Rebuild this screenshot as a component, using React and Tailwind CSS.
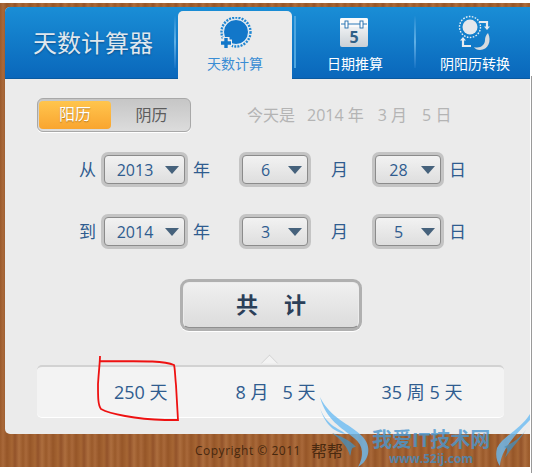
const font = 'font-["Open_Sans","Noto_Sans_CJK_SC",sans-serif]';

function CountIcon() {
  return (
    <svg width="34" height="34" viewBox="0 0 34 34">
      <circle cx="18" cy="15" r="14.5" fill="none" stroke="#1e86d2" strokeWidth="2.4" strokeDasharray="2 1.2" />
      <circle cx="18" cy="15" r="12.5" fill="#1277c9" stroke="#fff" strokeWidth="0.8" />
      <path d="M2 26h12M8 20v12" stroke="#ebebeb" strokeWidth="7" />
      <path d="M3 26h10M8 21v10" stroke="#1277c9" strokeWidth="3.4" />
    </svg>
  );
}

function CalendarIcon() {
  return (
    <svg width="30" height="31" viewBox="0 0 30 31">
      <defs>
        <linearGradient id="cal" x1="0" y1="0" x2="0" y2="1">
          <stop offset="0" stopColor="#ffffff" />
          <stop offset="1" stopColor="#c9d0d6" />
        </linearGradient>
      </defs>
      <rect x="1" y="1" width="28" height="29" rx="2" fill="url(#cal)" />
      <rect x="1" y="1" width="28" height="9" rx="2" fill="#fafafa" />
      <path d="M2 7h26" stroke="#2a78b8" strokeWidth="1.2" />
      <rect x="6" y="4" width="3" height="7" fill="#fff" stroke="#1f6cab" strokeWidth="0.9" />
      <rect x="21" y="4" width="3" height="7" fill="#fff" stroke="#1f6cab" strokeWidth="0.9" />
      <text x="15" y="26" textAnchor="middle" fontSize="16" fontWeight="700" fontFamily="Open Sans, sans-serif" fill="#2f6087">5</text>
    </svg>
  );
}

function ConvertIcon() {
  return (
    <svg width="34" height="36" viewBox="0 0 34 36">
      <circle cx="12" cy="12" r="7.5" fill="#e4e8ec" />
      <circle cx="12" cy="12" r="10.5" fill="none" stroke="#e8eef3" strokeWidth="1.4" strokeDasharray="1.6 1.4" />
      <path d="M21 7h8v5" fill="none" stroke="#e6ebef" strokeWidth="2.2" />
      <path d="M26 11.5l3 3.5 3-3.5z" fill="#e6ebef" />
      <path d="M13 31H5v-6" fill="none" stroke="#e6ebef" strokeWidth="2.2" />
      <path d="M2 25.5l3-3.5 3 3.5z" fill="#e6ebef" />
      <path d="M30 18c4 8 0 17-8 17-3 0-5-1-6-3 6 2 11-2 11-7 0-3 1-5 3-7z" fill="#d5dade" />
    </svg>
  );
}

function Divider() {
  return <div className="w-[2px] h-[52px] mt-[9px] shrink-0 bg-gradient-to-b from-[#1a8ad2] via-[#5fb0e6] to-[#1272c4]" />;
}

function Select({ value, className }) {
  return (
    <div className={`h-[35px] p-[3px] rounded-[7px] bg-[#c4c4c4] shrink-0 ${className}`}>
      <div className="h-full rounded-[4px] border border-[#8b8b8b] bg-gradient-to-b from-[#f2f2f2] to-[#dedede] flex items-center justify-between pr-[5px]">
        <span className="flex-1 text-center text-[16px] leading-none text-[#2f5c8f]">{value}</span>
        <span className="w-0 h-0 border-x-[7px] border-x-transparent border-t-[8px] border-t-[#46627c] shrink-0" />
      </div>
    </div>
  );
}

function DateRow({ lead, year, month, day, className }) {
  const unit = 'text-[17px] leading-none text-[#2f5c8f] text-center shrink-0';
  return (
    <div className={`flex items-center h-[35px] ${className}`}>
      <span className={`${unit} w-[17px] ml-[74px] mr-[5px]`}>{lead}</span>
      <Select value={year} className="w-[87px]" />
      <span className={`${unit} w-[17px] ml-[5px] mr-[29px]`}>年</span>
      <Select value={month} className="w-[72px]" />
      <span className={`${unit} w-[17px] ml-[20px] mr-[24px]`}>月</span>
      <Select value={day} className="w-[72px]" />
      <span className={`${unit} w-[17px] ml-[5px]`}>日</span>
    </div>
  );
}

export default function App() {
  return (
    <div className={`relative w-[536px] h-[473px] bg-white overflow-hidden pt-[3px] ${font}`}>
      <div className="w-[530px] h-[464px] pt-[4px] pl-[5px] bg-[#a0602f] bg-[repeating-linear-gradient(90deg,#9a5a2b_0px,#a9693a_3px,#965628_7px,#a66634_12px,#93532a_15px,#ad6e3e_19px,#9a5a2b_23px)]">
        <div className="w-[525px] h-[427px] rounded-[5px] rounded-r-none bg-[#ebebeb] overflow-hidden">
          <header className="flex h-[72px] bg-gradient-to-b from-[#1a8ed6] to-[#0a67bb] border-b border-[#0a5aa0]">
            <div className="w-[169px] pl-[28px] pt-[20px] text-[24px] leading-[32px] text-[#dfe7ee] [text-shadow:0_1px_2px_#0b4f8c]">
              天数计算器
            </div>
            <Divider />
            <div className="w-[114px] ml-[2px] mt-[4px] h-[68px] rounded-t-[5px] bg-[#ebebeb] flex flex-col items-center pt-[6px]">
              <div className="h-[37px]">
                <CountIcon />
              </div>
              <div className="text-[14px] leading-[20px] text-[#3a8dd4]">天数计算</div>
            </div>
            <div className="w-[2px] ml-[2px] h-[52px] mt-[9px] shrink-0 bg-[#4ea6e0]" />
            <div className="w-[118px] flex flex-col items-center pt-[10px] text-white">
              <div className="h-[38px] mr-[3px]">
                <CalendarIcon />
              </div>
              <div className="text-[14px] leading-[20px] mt-[-1px]">日期推算</div>
            </div>
            <Divider />
            <div className="flex-1 flex flex-col items-center pt-[8px] pl-[4px] text-white">
              <div className="h-[39px]">
                <ConvertIcon />
              </div>
              <div className="text-[14px] leading-[20px]">阴阳历转换</div>
            </div>
          </header>

          <div className="flex items-center ml-[32px] mt-[19px] h-[34px]">
            <div className="w-[154px] h-[34px] rounded-[6px] border border-[#a8a8a8] bg-gradient-to-b from-[#c6c6c6] to-[#dcdcdc] p-[1px] flex shadow-[0_1px_0_#fff]">
              <div className="w-[72px] my-[1px] rounded-[4px] bg-gradient-to-b from-[#ffc54d] to-[#f9a52f] text-white text-[16px] leading-[27px] text-center [text-shadow:0_1px_1px_#b87a1a]">
                阳历
              </div>
              <div className="flex-1 pl-[3px] text-[#5c5c5c] text-[16px] leading-[30px] text-center">阴历</div>
            </div>
            <div className="ml-[56px] flex text-[16px] leading-none text-[#b4b4b4] whitespace-pre">
              <span>今天是</span>
              <span className="ml-[12px]">2014 年</span>
              <span className="ml-[14px]">3 月</span>
              <span className="ml-[15px]">5 日</span>
            </div>
          </div>

          <DateRow lead="从" year="2013" month="6" day="28" className="mt-[20px]" />
          <DateRow lead="到" year="2014" month="3" day="5" className="mt-[27px]" />

          <div className="ml-[175px] mt-[30px] w-[182px] h-[52px] rounded-[9px] bg-[#b0b0b0] p-[3px] shadow-[0_1px_0_#fff]">
            <div className="h-full pb-[2px] rounded-[6px] border border-[#ececec] border-b-[#8f8f8f] bg-gradient-to-b from-[#f0f0f0] to-[#dcdcdc] flex items-center justify-center gap-[26px] text-[22px] font-bold leading-none text-[#2b3f58]">
              <span>共</span>
              <span>计</span>
            </div>
          </div>

          <div className="relative ml-[32px] mt-[34px] w-[467px] h-[53px] rounded-[5px] bg-[#f3f3f3] border-t-2 border-t-[#d2d2d2] border-b border-b-white flex items-center text-[18px] leading-none text-[#2f5c8f] whitespace-pre">
            <span className="absolute left-[226px] top-[-10px] w-[13px] h-[13px] rotate-45 bg-[#f3f3f3] border-l border-t border-[#d2d2d2] [clip-path:polygon(0_0,100%_0,0_100%)]" />
            <span className="ml-[77px]">250 天</span>
            <span className="ml-[68px]">8 月</span>
            <span className="ml-[14px]">5 天</span>
            <span className="ml-[66px]">35 周 5 天</span>
          </div>
        </div>

        <div className="flex items-center ml-[190px] mt-[8px] text-[12px] leading-[16px] text-[#46280f]">
          <span className="tracking-[0.5px]">Copyright © 2011</span>
          <span className="ml-[10px] text-[16px] leading-[18px] text-[#4a2a10]">帮帮</span>
        </div>
      </div>

      {/* thin window edge at the right */}
      <div className="absolute left-[531px] top-[76px] bottom-0 w-px bg-[#9a9a9a]" />

      {/* red marker scribble */}
      <svg className="absolute left-0 top-0 pointer-events-none" width="536" height="473" fill="none">
        <path
          d="M100 356C100 362 99 368 98 384C98 398 98 405 101 409C110 414 135 419 165 420H178L176 385C175 376 175 368 174 365C165 361 150 361 100 361"
          stroke="#ee1111"
          strokeWidth="1.8"
        />
        {/* watermark wings */}
        <g fill="#6bbcf2" fillOpacity="0.8">
          <path d="M320 397C330 418 350 424 362 436C372 446 370 460 358 467C364 456 364 446 354 438C342 428 326 420 320 397Z" />
          <path d="M320 408C326 425 338 428 346 434C338 433 326 428 320 408Z" />
          <path d="M332 433C345 438 352 442 356 447C350 447 352 452 350 456C348 448 342 440 332 433Z" fill="#4a8fb8" />
          <path d="M530 414C520 430 503 436 497 448C495 456 497 462 500 466C501 452 510 440 530 420Z" />
          <path d="M526 430C518 440 512 443 504 447C510 448 506 454 505 458C510 450 518 442 526 430Z" fill="#4a8fb8" />
        </g>
      </svg>
      <div className="absolute left-[372px] top-[429px] text-[20px] leading-[22px] font-bold text-[#4a97d0] opacity-80 whitespace-nowrap">
        我爱IT技术网
      </div>
      <div className="absolute left-[389px] top-[452px] text-[12px] leading-[14px] font-bold text-[#3f8fcb] opacity-75 whitespace-nowrap">
        www.52ij.com
      </div>
    </div>
  );
}
